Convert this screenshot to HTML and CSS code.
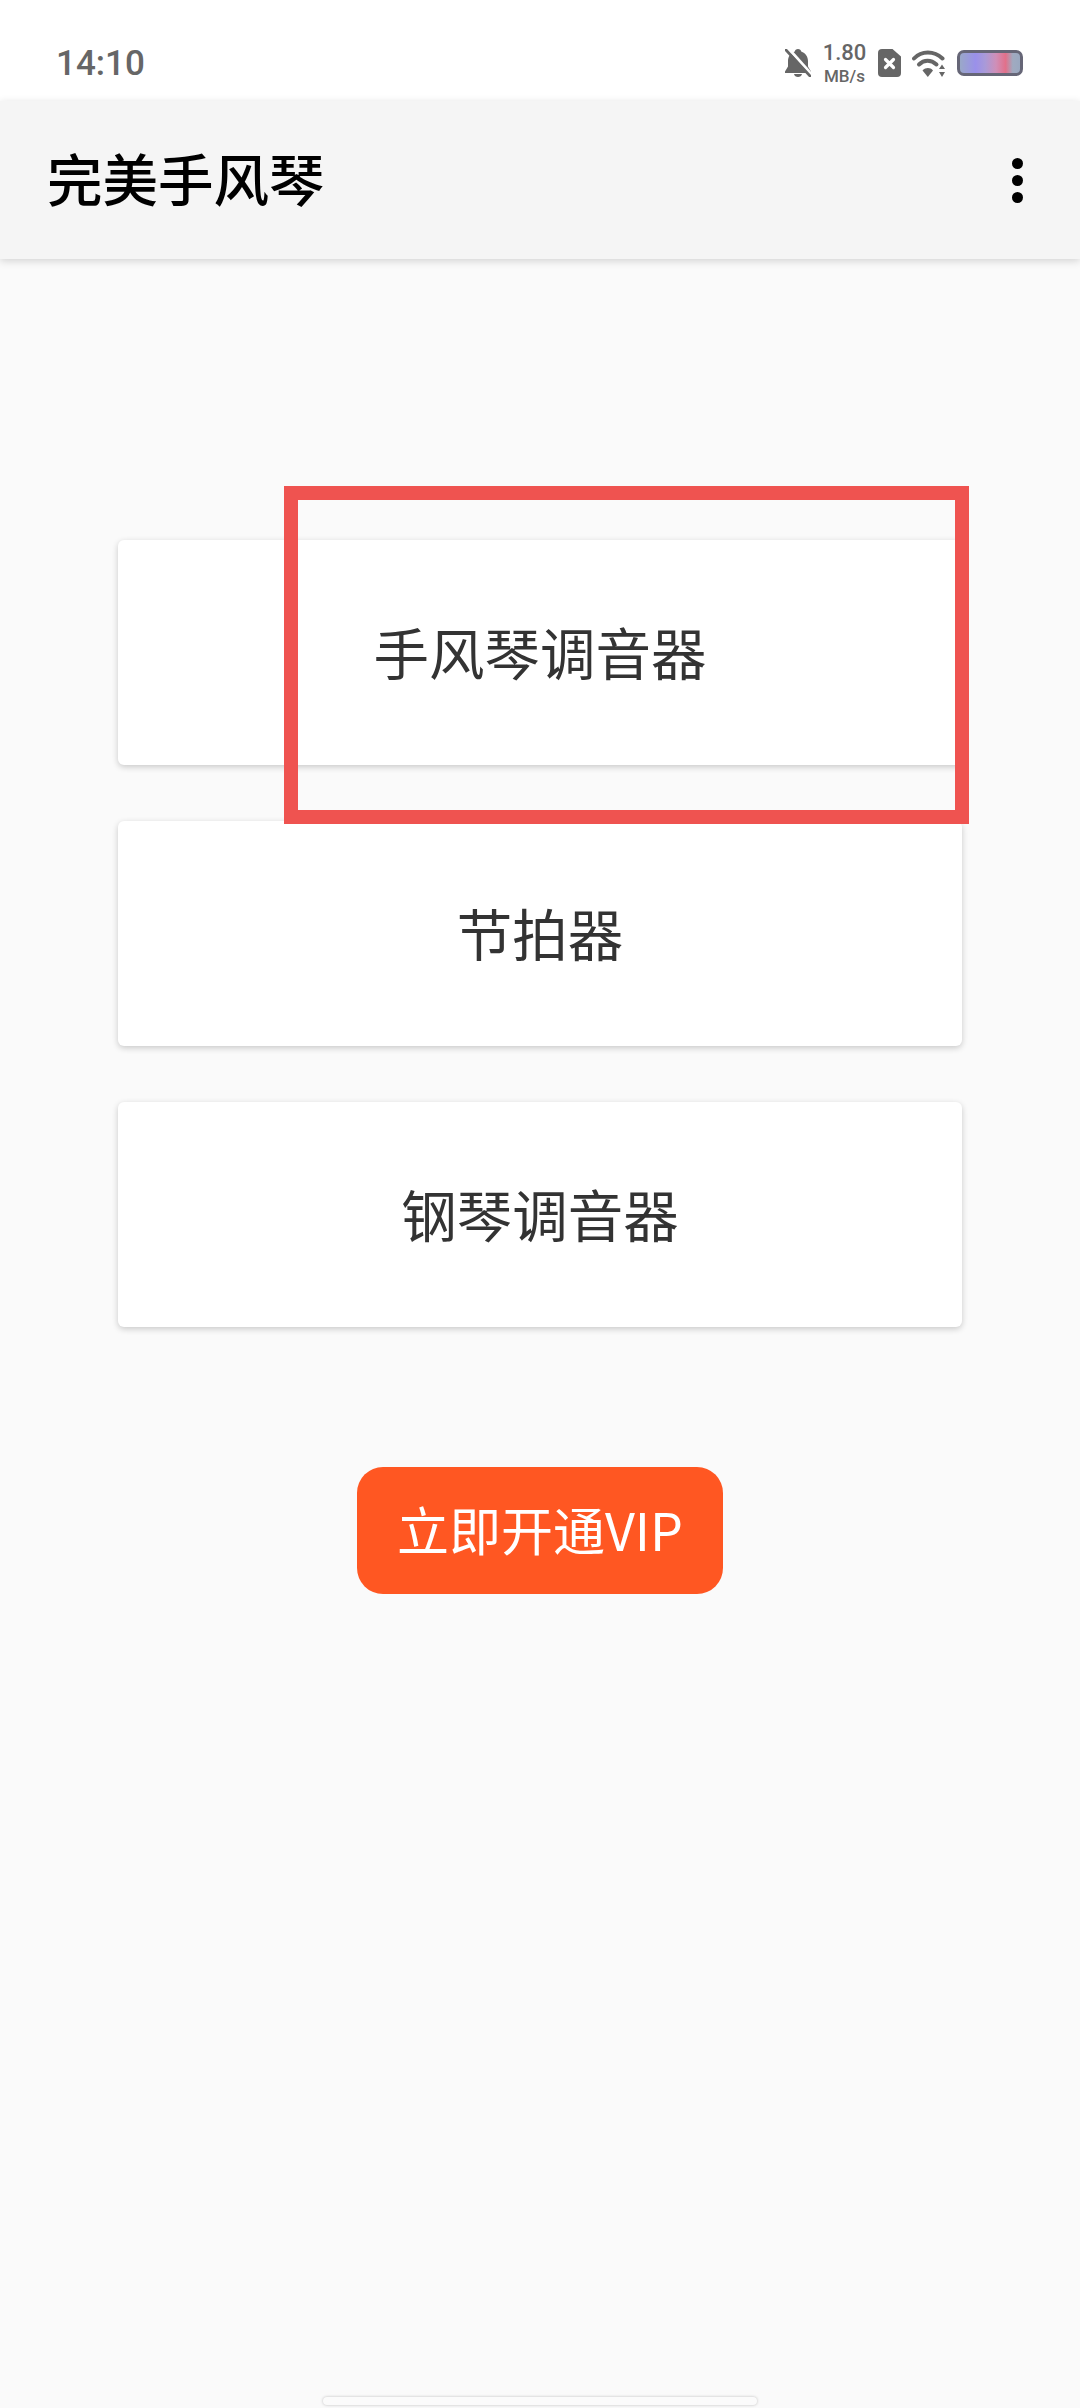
FILE: index.html
```html
<!DOCTYPE html>
<html lang="zh-CN">
<head>
    <meta charset="UTF-8">
    <meta name="viewport" content="width=device-width, initial-scale=1.0">
    <title>完美手风琴</title>
    <link rel="stylesheet" href="styles.css">
</head>
<body>
    <div class="page">
        <div class="status-bar">
            <span class="time">14:10</span>
            <div class="status-icons">
                <svg class="icon-bell" viewBox="0 0 26 28">
                    <path d="M13 0c1.800 0 3 1 3.200 2.400C20.500 3.800 23 7.500 23 12v5.500l3 5V24H0v-1.500l3-5V12c0-4.500 2.500-8.200 6.800-9.600C10 1 11.200 0 13 0zM9 25h8c-.3 1.800-2 3-4 3s-3.700-1.200-4-3z" fill="#666"/>
                    <path d="M3 -1l24 27" stroke="#fff" stroke-width="3"/>
                    <path d="M1 1l24 26" stroke="#666" stroke-width="2.600" stroke-linecap="round"/>
                </svg>
                <div class="speed">
                    <span class="speed-num">1.80</span>
                    <span class="speed-unit">MB/s</span>
                </div>
                <svg class="icon-sim" viewBox="0 0 23 28">
                    <path d="M4 0h10.500L23 7.500V24a4 4 0 0 1-4 4H4a4 4 0 0 1-4-4V4a4 4 0 0 1 4-4z" fill="#666"/>
                    <path d="M7.500 10.500l8 8M15.500 10.500l-8 8" stroke="#fff" stroke-width="3.200" stroke-linecap="round"/>
                </svg>
                <svg class="icon-wifi" viewBox="0 0 33 27">
                    <path d="M2 8.500C9.500 0.500 22 0.500 30.500 8.500" fill="none" stroke="#666" stroke-width="4" stroke-linecap="round"/>
                    <path d="M7 14.500c5-5 12-5 17.500 0" fill="none" stroke="#666" stroke-width="4" stroke-linecap="round"/>
                    <path d="M10.500 20.500c3.500-3.200 7.500-3.200 10.500 0L15.800 27z" fill="#666"/>
                    <path d="M30 14.500l3 4.500h-6zM30 27l3-5h-6z" fill="#666"/>
                </svg>
                <div class="battery"></div>
            </div>
        </div>

        <div class="toolbar">
            <h1 class="title">完美手风琴</h1>
            <div class="more">
                <span class="dot"></span>
                <span class="dot"></span>
                <span class="dot"></span>
            </div>
        </div>

        <div class="content">
            <div class="menu">
                <div class="card">手风琴调音器</div>
                <div class="card">节拍器</div>
                <div class="card">钢琴调音器</div>
            </div>
            <div class="vip-btn">立即开通VIP</div>
        </div>

        <div class="nav-bar"></div>

        <div class="highlight"></div>
    </div>
</body>
</html>
```

FILE: styles.css
```css
* {
    box-sizing: border-box;
}

html, body {
    margin: 0;
    padding: 0;
}

body {
    font-family: "Noto Sans CJK SC", "Noto Sans", sans-serif;
    background-color: #fafafa;
}

.page {
    position: relative;
    width: 1080px;
    height: 2408px;
    display: flex;
    flex-direction: column;
    overflow: hidden;
}

.status-bar {
    height: 101px;
    flex-shrink: 0;
    background-color: #fff;
    display: flex;
    align-items: center;
    justify-content: space-between;
    padding: 25px 57px 0 56px;
}

.time {
    font-family: Roboto, sans-serif;
    font-weight: 500;
    font-size: 35px;
    color: #666;
}

.status-icons {
    display: flex;
    align-items: center;
}

.icon-bell {
    width: 26px;
    height: 28px;
    margin-right: 12px;
}

.speed {
    display: flex;
    flex-direction: column;
    align-items: center;
    font-family: Roboto, sans-serif;
    font-weight: 500;
    color: #666;
    width: 43px;
    margin-right: 12px;
}

.speed-num {
    font-size: 22px;
    line-height: 26px;
}

.speed-unit {
    font-size: 17px;
    line-height: 20px;
}

.icon-sim {
    width: 23px;
    height: 28px;
    margin-right: 11px;
}

.icon-wifi {
    width: 33px;
    height: 27px;
    margin-right: 12px;
}

.battery {
    width: 66px;
    height: 26px;
    border: 3px solid #667;
    border-radius: 7px;
    background: linear-gradient(90deg, #9aa8c8 0%, #9a90ea 26%, #a99ad8 42%, #cf8fb8 60%, #e2708a 76%, #a0aac0 88%, #9aa8c0 100%);
}

.toolbar {
    height: 158px;
    flex-shrink: 0;
    background-color: #f5f5f5;
    box-shadow: 0 2px 8px rgba(0, 0, 0, 0.16);
    display: flex;
    align-items: center;
    justify-content: space-between;
    padding: 0 57px 0 47px;
    position: relative;
}

.title {
    margin: 0 0 4px 0;
    font-size: 55.5px;
    font-weight: 500;
    color: #000;
    line-height: 1;
}

.more {
    display: flex;
    flex-direction: column;
    gap: 6px;
}

.dot {
    width: 11px;
    height: 11px;
    border-radius: 50%;
    background-color: #000;
}

.content {
    display: flex;
    flex-direction: column;
    align-items: center;
    padding-top: 281px;
    flex: 1;
}

.menu {
    display: flex;
    flex-direction: column;
    gap: 56px;
    width: 844px;
}

.card {
    height: 225px;
    padding-bottom: 4px;
    background-color: #fff;
    border-radius: 6px;
    box-shadow: 0 2px 6px rgba(0, 0, 0, 0.2);
    display: flex;
    align-items: center;
    justify-content: center;
    font-size: 55.5px;
    color: #333;
}

.vip-btn {
    margin-top: 140px;
    width: 366px;
    height: 127px;
    padding-bottom: 4px;
    background-color: #ff5722;
    border-radius: 26px;
    display: flex;
    align-items: center;
    justify-content: center;
    font-size: 52px;
    color: #fff;
}

.nav-bar {
    height: 8px;
    width: 434px;
    margin: 0 auto 3px;
    flex-shrink: 0;
    background-color: #fbfbfb;
    border-radius: 4px;
    box-shadow: 0 0 3px rgba(0, 0, 0, 0.25);
}

/* annotation box drawn over the first card */
.highlight {
    position: absolute;
    left: 284px;
    top: 486px;
    width: 685px;
    height: 338px;
    border: 14px solid #ef5350;
}
```
